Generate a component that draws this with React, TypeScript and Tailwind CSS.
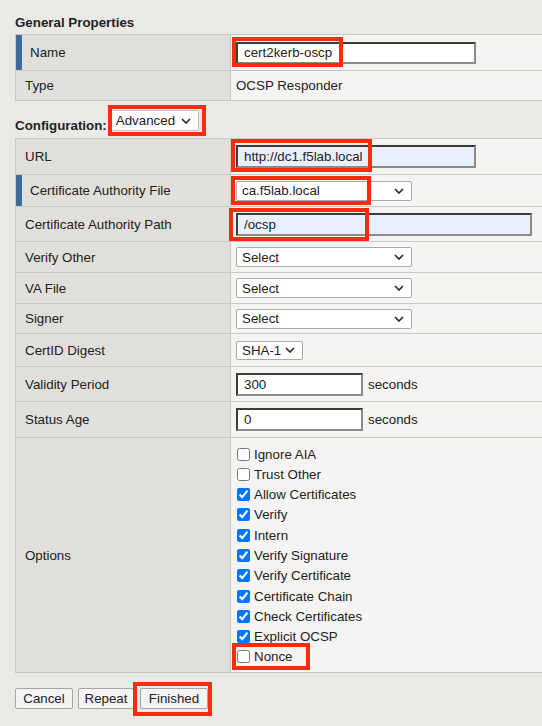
import React from "react";

const Chevron = () => (
  <svg width="10" height="6" viewBox="0 0 10 6" className="shrink-0">
    <path d="M1 1l4 4 4-4" fill="none" stroke="#222" strokeWidth="1.6" />
  </svg>
);

function Select({ value, className }: { value: string; className: string }) {
  return (
    <div className={`flex items-center justify-between bg-white border border-[#a9a9a9] rounded-[2px] pl-[5px] pr-[7px] ${className}`}>
      <span>{value}</span>
      <Chevron />
    </div>
  );
}

function TextInput({ value, className }: { value: string; className: string }) {
  return (
    <input
      readOnly
      defaultValue={value}
      className={`border-2 border-t-[#3c3c3c] border-l-[#3c3c3c] border-b-[#8a8a8a] border-r-[#8a8a8a] px-[6px] outline-none text-[#222] ${className}`}
    />
  );
}

function Row({
  label,
  h,
  accent,
  children,
}: {
  label: string;
  h: string;
  accent?: boolean;
  children: React.ReactNode;
}) {
  return (
    <div className={`flex border-t border-[#c9c8c5] first:border-t-0 ${h}`}>
      <div className="w-[215px] shrink-0 bg-[#e0dfdb] border-r border-[#c9c8c5] flex items-stretch">
        {accent && <div className="w-[6px] bg-[#3d6b99]" />}
        <div className={`flex items-center ${accent ? "pl-[8px]" : "pl-[9px]"}`}>{label}</div>
      </div>
      <div className="flex-1 bg-[#f5f4f2] flex items-center pl-[5px]">{children}</div>
    </div>
  );
}

const options: [string, boolean][] = [
  ["Ignore AIA", false],
  ["Trust Other", false],
  ["Allow Certificates", true],
  ["Verify", true],
  ["Intern", true],
  ["Verify Signature", true],
  ["Verify Certificate", true],
  ["Certificate Chain", true],
  ["Check Certificates", true],
  ["Explicit OCSP", true],
  ["Nonce", false],
];

const RedBox = ({ className }: { className: string }) => (
  <div className={`absolute border-[4px] border-[#fb2b10] pointer-events-none ${className}`} />
);

const btn = "h-[21px] bg-[#f3f3f3] border border-[#a5a5a5] rounded-[2px] text-center";

export default function App() {
  return (
    <div className="relative min-h-screen w-[542px] overflow-hidden bg-[#ebe9e6] text-[13.33px] leading-[15px] text-[#222] font-['Liberation_Sans',Arial,sans-serif]">
      <div className="pl-[15px] pt-[15px]">
        <h2 className="font-bold h-[19px]">General Properties</h2>

        {/* General properties table */}
        <div className="border border-[#c9c8c5] w-[540px]">
          <Row label="Name" h="h-[35px]" accent>
            <TextInput value="cert2kerb-oscp" className="w-[240px] h-[22px] bg-white" />
          </Row>
          <Row label="Type" h="h-[30px]">
            <span>OCSP Responder</span>
          </Row>
        </div>

        {/* Configuration header */}
        <div className="flex items-end h-[37px] pb-[5px]">
          <span className="font-bold">Configuration:</span>
          <Select value="Advanced" className="ml-[3px] mb-[2px] w-[89px] h-[21px] border-[#c4c4c4]" />
        </div>

        {/* Configuration table */}
        <div className="border border-[#c9c8c5] w-[540px]">
          <Row label="URL" h="h-[35px]">
            <TextInput value="http://dc1.f5lab.local" className="w-[240px] h-[23px] bg-[#e8f0fe]" />
          </Row>
          <Row label="Certificate Authority File" h="h-[32px]" accent>
            <Select value="ca.f5lab.local" className="w-[176px] h-[20px]" />
          </Row>
          <Row label="Certificate Authority Path" h="h-[35px]">
            <TextInput value="/ocsp" className="w-[296px] h-[23px] bg-[#e8f0fe]" />
          </Row>
          <Row label="Verify Other" h="h-[31px]">
            <Select value="Select" className="w-[176px] h-[20px]" />
          </Row>
          <Row label="VA File" h="h-[31px]">
            <Select value="Select" className="w-[176px] h-[20px]" />
          </Row>
          <Row label="Signer" h="h-[30px]">
            <Select value="Select" className="w-[176px] h-[20px]" />
          </Row>
          <Row label="CertID Digest" h="h-[33px]">
            <Select value="SHA-1" className="w-[67px] h-[19px] pr-[5px]" />
          </Row>
          <Row label="Validity Period" h="h-[35px]">
            <TextInput value="300" className="w-[127px] h-[23px] bg-white" />
            <span className="ml-[5px]">seconds</span>
          </Row>
          <Row label="Status Age" h="h-[36px]">
            <TextInput value="0" className="w-[127px] h-[23px] bg-white" />
            <span className="ml-[5px]">seconds</span>
          </Row>
          <Row label="Options" h="h-[235px]">
            <div className="flex flex-col pt-[6px] pb-[5px]">
              {options.map(([name, on]) => (
                <label key={name} className="flex items-center h-[20.3px]">
                  <input
                    type="checkbox"
                    defaultChecked={on}
                    className="m-0 ml-[1px] w-[13px] h-[13px] accent-[#0075ff]"
                  />
                  <span className="ml-[4px]">{name}</span>
                </label>
              ))}
            </div>
          </Row>
        </div>

        {/* Buttons */}
        <div className="flex items-center gap-[5px] mt-[15px]">
          <button className={`${btn} w-[58px]`}>Cancel</button>
          <button className={`${btn} w-[56px]`}>Repeat</button>
          <button className={`${btn} w-[68px] ml-[1px]`}>Finished</button>
        </div>
      </div>

      {/* Annotation boxes */}
      <RedBox className="left-[232px] top-[37px] w-[111px] h-[30px]" />
      <RedBox className="left-[108px] top-[105px] w-[98px] h-[31px]" />
      <RedBox className="left-[231px] top-[139px] w-[141px] h-[33px]" />
      <RedBox className="left-[231px] top-[176px] w-[140px] h-[29px]" />
      <RedBox className="left-[229px] top-[208px] w-[140px] h-[33px]" />
      <RedBox className="left-[232px] top-[643px] w-[78px] h-[27px]" />
      <RedBox className="left-[133px] top-[682px] w-[79px] h-[34px]" />
    </div>
  );
}
